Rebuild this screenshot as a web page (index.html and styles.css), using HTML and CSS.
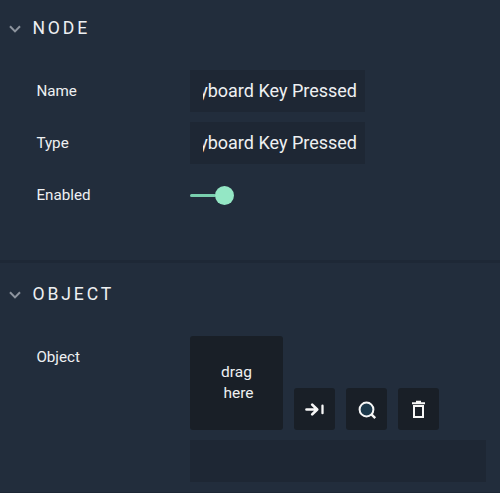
FILE: index.html
```html
<!DOCTYPE html>
<html lang="en">
<head>
<meta charset="utf-8">
<title>Node properties</title>
<link rel="stylesheet" href="styles.css">
</head>
<body>
<main class="panel">
  <section class="section node">
    <h2 class="heading">
      <svg class="chevron" width="12" height="8" viewBox="0 0 12 8"><path d="M1 1.2 6 6.4 11 1.2"/></svg>
      <span>NODE</span>
    </h2>
    <div class="row"><span class="label">Name</span><div class="field"><div class="clip"><span>Keyboard Key Pressed</span></div></div></div>
    <div class="row"><span class="label">Type</span><div class="field"><div class="clip"><span>Keyboard Key Pressed</span></div></div></div>
    <div class="row"><span class="label">Enabled</span><div class="toggle"><i class="track"></i><i class="knob"></i></div></div>
  </section>
  <section class="section object">
    <h2 class="heading">
      <svg class="chevron" width="12" height="8" viewBox="0 0 12 8"><path d="M1 1.2 6 6.4 11 1.2"/></svg>
      <span>OBJECT</span>
    </h2>
    <div class="row top">
      <span class="label">Object</span>
      <div class="picker">
        <div class="controls">
          <div class="drop"><span>drag</span><span class="second">here</span></div>
          <button class="button" aria-label="Assign"><svg width="41" height="41" viewBox="0 0 41 41"><path class="arrow" d="M12.5 20.5H23M18.2 15.6 23.2 20.5 18.2 25.4"/><path class="bar" d="M28.5 16.7V24.2"/></svg></button>
          <button class="button" aria-label="Find"><svg width="41" height="41" viewBox="0 0 41 41"><circle class="lens" cx="20.5" cy="20.5" r="6.9"/><path class="handle" d="M25.2 25.2 29.2 29.2"/></svg></button>
          <button class="button" aria-label="Delete"><svg width="41" height="41" viewBox="0 0 41 41"><path class="lid" d="M14 14.2H27M18 12.8H23"/><path class="bin" d="M16 17H25V28H16Z"/></svg></button>
        </div>
        <div class="result"></div>
      </div>
    </div>
  </section>
</main>
</body>
</html>
```

FILE: styles.css
```css
* { box-sizing: border-box; }
body {
  margin: 0;
  background: #222d3c;
  color: #eef0f2;
  font-family: Roboto, "Liberation Sans", sans-serif;
}
.panel { height: 493px; overflow: hidden; border-bottom: 1px solid #1c2634; }
.section { padding-top: 14px; }
.node { height: 263px; border-bottom: 3px solid #1e2836; }
.object { padding-top: 17px; }
.heading {
  display: flex;
  align-items: center;
  height: 28px;
  margin: 0 0 28px;
  padding-left: 9px;
  font-size: 17.6px;
  font-weight: 400;
  line-height: 20px;
  letter-spacing: 2.9px;
}
.chevron { margin-top: 1px; margin-right: 11.4px; fill: none; stroke: #8d949e; stroke-width: 2; }
.row { display: flex; align-items: center; height: 42px; margin-bottom: 10px; padding-left: 36px; }
.label { flex: none; width: 154px; padding-left: 0.4px; font-size: 15.2px; line-height: 42px; }
.field {
  display: flex;
  align-items: center;
  width: 175px;
  height: 42px;
  padding: 0 8px 0 13px;
  background: #1e2734;
}
.clip {
  display: flex;
  justify-content: flex-end;
  width: 154px;
  overflow: hidden;
  white-space: nowrap;
  font-size: 18px;
  line-height: 28px;
}
.toggle { display: flex; align-items: center; }
.track { width: 26px; height: 3px; border-radius: 2px; background: #79cfae; }
.knob { width: 19px; height: 19px; margin-left: -1.5px; border-radius: 50%; background: #94e7c5; }
.top { align-items: flex-start; height: auto; }
.controls { display: flex; align-items: flex-end; gap: 11px; margin-bottom: 10px; }
.drop {
  display: flex;
  flex-direction: column;
  align-items: center;
  justify-content: center;
  width: 93px;
  height: 94px;
  border-radius: 3px;
  background: #191f27;
  font-size: 15.5px;
  line-height: 21px;
}
.second { padding-left: 4px; }
.button { width: 41px; height: 42px; padding: 0; border: 0; border-radius: 3px; background: #191f27; }
.button svg { display: block; fill: none; stroke: #f7f7f7; stroke-width: 2; }
.button .arrow { stroke-width: 2.7; stroke-linecap: round; stroke-linejoin: round; }
.button .bar { stroke-width: 2.3; stroke-linecap: round; }
.button .lens { fill: #1d394b; }
.button .handle { stroke-width: 2.4; }
.result { width: 296px; height: 42px; background: #1e2734; }
```
